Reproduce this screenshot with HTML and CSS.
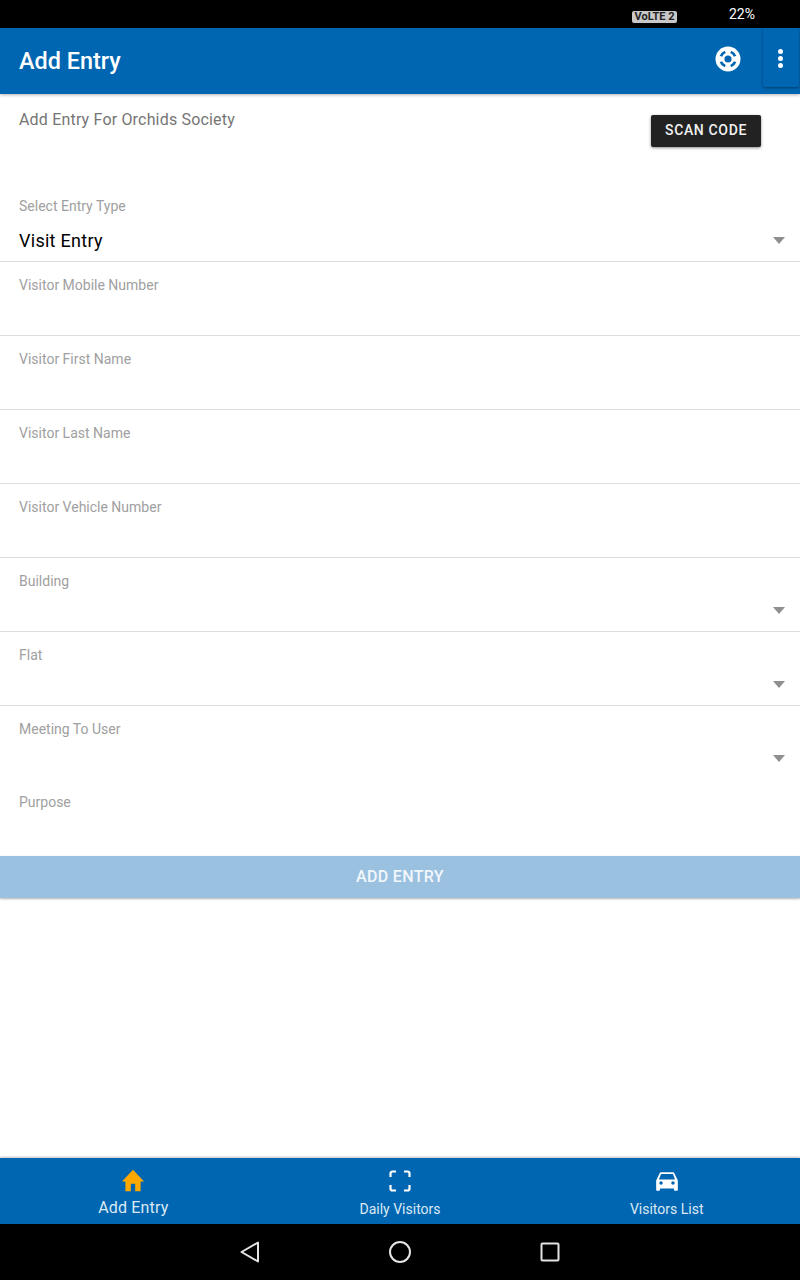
FILE: index.html
```html
<!DOCTYPE html>
<html lang="en">
<head>
    <meta charset="UTF-8">
    <meta name="viewport" content="width=device-width, initial-scale=1.0">
    <title>Add Entry</title>
    <link rel="stylesheet" href="styles.css">
</head>
<body>
    <div class="status-bar">
        <span class="volte">VoLTE 2</span>
        <span class="battery">22%</span>
    </div>

    <header class="app-bar">
        <h1>Add Entry</h1>
        <svg class="support-icon" viewBox="0 0 26 26" width="26" height="26">
            <circle cx="13" cy="13" r="12.500" fill="#fff"/>
            <circle cx="13" cy="13" r="3.600" fill="#0066b1"/>
            <g fill="none" stroke="#0066b1" stroke-width="2.600">
                <path d="M5.900 10.280 A7.600 7.600 0 0 1 10.280 5.900"/>
                <path d="M15.720 5.900 A7.600 7.600 0 0 1 20.100 10.280"/>
                <path d="M20.100 15.720 A7.600 7.600 0 0 1 15.720 20.100"/>
                <path d="M10.280 20.100 A7.600 7.600 0 0 1 5.900 15.720"/>
            </g>
        </svg>
        <div class="menu-button">
            <span></span><span></span><span></span>
        </div>
    </header>

    <main class="content">
        <div class="intro">
            <p>Add Entry For Orchids Society</p>
            <button class="scan-button">SCAN CODE</button>
        </div>

        <form class="entry-form">
            <div class="field first">
                <label>Select Entry Type</label>
                <div class="value">Visit Entry</div>
                <i class="caret"></i>
            </div>
            <div class="field"><label>Visitor Mobile Number</label></div>
            <div class="field"><label>Visitor First Name</label></div>
            <div class="field"><label>Visitor Last Name</label></div>
            <div class="field"><label>Visitor Vehicle Number</label></div>
            <div class="field"><label>Building</label><i class="caret"></i></div>
            <div class="field"><label>Flat</label><i class="caret"></i></div>
            <div class="field no-line"><label>Meeting To User</label><i class="caret"></i></div>
            <div class="field no-line purpose"><label>Purpose</label></div>
            <button type="button" class="add-button">ADD ENTRY</button>
        </form>
    </main>

    <nav class="bottom-tabs">
        <a class="tab active">
            <svg viewBox="0 0 24 24" width="26" height="26"><path fill="#ffa800" d="M10 21.500v-7h4v7h5v-9h3.200L12 1.500 1.800 12.500H5v9z"/></svg>
            <span>Add Entry</span>
        </a>
        <a class="tab">
            <svg viewBox="-1 -1 26 26" width="26" height="26"><path fill="none" stroke="#fff" stroke-width="2.200" d="M2.500 8V4.500a2 2 0 0 1 2-2H8M16 2.500h3.500a2 2 0 0 1 2 2V8M21.500 16v3.500a2 2 0 0 1-2 2H16M8 21.500H4.500a2 2 0 0 1-2-2V16"/></svg>
            <span>Daily Visitors</span>
        </a>
        <a class="tab">
            <svg viewBox="0 0 24 24" width="26" height="26"><path fill="#fff" d="M18.900 5c-.2-.6-.8-1-1.400-1h-11c-.7 0-1.200.4-1.400 1L2 11.500V20c0 .6.400 1 1 1h1.500c.6 0 1-.4 1-1v-1h13v1c0 .6.400 1 1 1H21c.6 0 1-.4 1-1v-8.500L18.900 5zM6.500 15.500a1.600 1.600 0 1 1 0-3.200 1.600 1.600 0 0 1 0 3.200zm11 0a1.600 1.600 0 1 1 0-3.200 1.600 1.600 0 0 1 0 3.200zM4.600 10.500l1.900-5h11l1.900 5z"/></svg>
            <span>Visitors List</span>
        </a>
    </nav>

    <div class="system-nav">
        <svg viewBox="0 0 24 24" width="24" height="24"><path fill="none" stroke="#e4e4e4" stroke-width="2" stroke-linejoin="round" d="M20 2.500v19L3.500 12z"/></svg>
        <svg viewBox="0 0 24 24" width="24" height="24"><circle cx="12" cy="12" r="10" fill="none" stroke="#e4e4e4" stroke-width="2"/></svg>
        <svg viewBox="0 0 24 24" width="24" height="24"><rect x="3.500" y="3.500" width="17" height="17" rx="1" fill="none" stroke="#e4e4e4" stroke-width="2"/></svg>
    </div>
</body>
</html>
```

FILE: styles.css
```css
:root {
    --primary-color: #0066b1;
    --line-color: #dedede;
    --label-color: #a0a0a0;
}

* {
    box-sizing: border-box;
}

body {
    font-family: Roboto, 'Liberation Sans', sans-serif;
    margin: 0;
    height: 1280px;
    display: flex;
    flex-direction: column;
    background-color: #fff;
    overflow: hidden;
}

/* Status bar */
.status-bar {
    height: 28px;
    background-color: #000;
    color: #fff;
    display: flex;
    align-items: center;
    flex-shrink: 0;
    padding-left: 632px;
}

.volte {
    width: 45px;
    height: 12px;
    line-height: 12px;
    background-color: #c8c8c8;
    color: #222;
    border-radius: 2px;
    font-size: 11px;
    font-weight: 700;
    text-align: center;
    white-space: nowrap;
    margin-top: 5px;
}

.battery {
    font-size: 14px;
    margin-left: 52px;
    margin-top: -1px;
}

/* App bar */
.app-bar {
    height: 66px;
    background-color: var(--primary-color);
    display: flex;
    align-items: center;
    flex-shrink: 0;
    padding-left: 19px;
    padding-right: 1px;
    box-shadow: 0 1px 3px rgba(0, 0, 0, 0.3);
    position: relative;
    z-index: 1;
}

.app-bar h1 {
    color: #fff;
    font-size: 23.4px;
    font-weight: 500;
    margin: 0;
    flex: 1;
}

.support-icon {
    margin-right: 22px;
    margin-top: -4px;
}

.menu-button {
    width: 36px;
    height: 59px;
    margin-bottom: 7px;
    padding-top: 1px;
    padding-right: 2px;
    display: flex;
    flex-direction: column;
    align-items: center;
    justify-content: center;
    gap: 2px;
    background-color: var(--primary-color);
    box-shadow: 0 1px 3px rgba(0, 0, 0, 0.4);
    border-radius: 2px;
}

.menu-button span {
    width: 5px;
    height: 5px;
    border-radius: 50%;
    background-color: #fff;
}

/* Content */
.content {
    flex: 1;
}

.intro {
    height: 94px;
    display: flex;
    justify-content: space-between;
    align-items: flex-start;
    padding-left: 19px;
    padding-right: 39px;
}

.intro p {
    margin: 16px 0 0;
    font-size: 16px;
    color: #757575;
    letter-spacing: 0.18px;
}

.scan-button {
    margin-top: 21px;
    width: 110px;
    height: 32px;
    padding: 0 0 3px;
    border: none;
    border-radius: 2px;
    background-color: #222;
    color: #f2f2f2;
    font-family: inherit;
    font-size: 14px;
    font-weight: 500;
    letter-spacing: 0.65px;
    box-shadow: 0 1px 3px rgba(0, 0, 0, 0.45);
}

.field {
    height: 74px;
    padding-top: 14px;
    padding-left: 19px;
    border-bottom: 1px solid var(--line-color);
    position: relative;
}

.field.first {
    padding-top: 9px;
}

.field label {
    display: block;
    font-size: 14px;
    line-height: 18px;
    color: var(--label-color);
}

.field .value {
    font-size: 18px;
    line-height: 22px;
    color: #000;
    margin-top: 15px;
    letter-spacing: 0.28px;
}

.field.no-line {
    border-bottom: none;
}

.field.purpose {
    height: 76px;
    padding-top: 13px;
}

.caret {
    position: absolute;
    right: 15px;
    top: 49px;
    width: 0;
    height: 0;
    border-left: 6px solid transparent;
    border-right: 6px solid transparent;
    border-top: 7px solid #8f8f8f;
}

.add-button {
    display: block;
    width: 100%;
    height: 42px;
    padding: 0 0 2px;
    border: none;
    background-color: #9bc1e1;
    color: #f2f7fb;
    font-family: inherit;
    font-size: 16px;
    font-weight: 500;
    letter-spacing: 0.35px;
    box-shadow: 0 1px 2px rgba(0, 0, 0, 0.3);
}

/* Bottom tabs */
.bottom-tabs {
    height: 66px;
    background-color: var(--primary-color);
    display: flex;
    flex-shrink: 0;
    box-shadow: 0 -1px 2px rgba(0, 0, 0, 0.25);
}

.tab {
    flex: 1;
    display: flex;
    flex-direction: column;
    align-items: center;
    padding-top: 10px;
    color: #dce9f4;
    font-size: 14px;
}

.tab span {
    margin-top: 7px;
}

.tab.active {
    font-size: 16px;
    letter-spacing: 0.15px;
}

.tab.active span {
    margin-top: 4px;
}

/* Android nav */
.system-nav {
    height: 56px;
    background-color: #000;
    display: flex;
    justify-content: center;
    align-items: center;
    gap: 126px;
    flex-shrink: 0;
}
```
